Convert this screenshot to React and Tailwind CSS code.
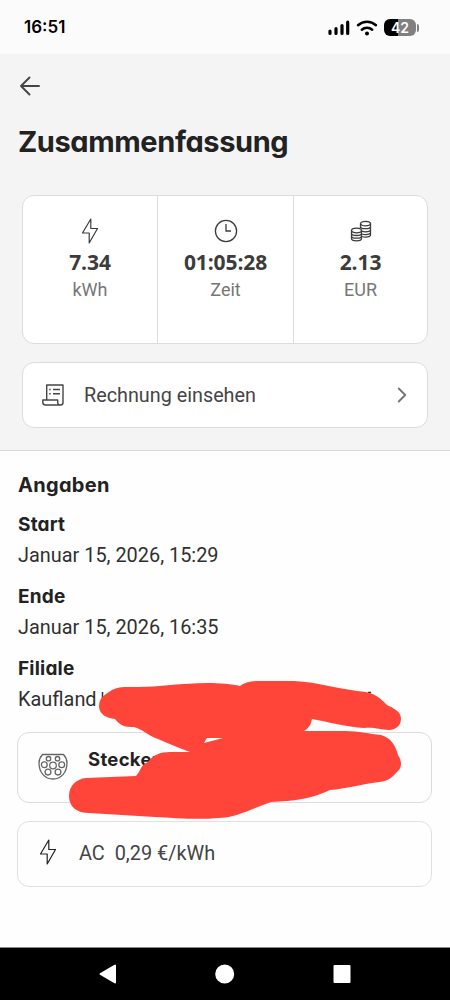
import { ChevronRight } from 'lucide-react';

function BackIcon() {
  return (
    <svg viewBox="0 0 22 20" className="h-5 w-[22px]" fill="none" stroke="currentColor" strokeWidth="1.9" strokeLinecap="round" strokeLinejoin="round">
      <path d="M10.500 1.500 2 10l8.500 8.500M2 10h18" />
    </svg>
  );
}

function BoltIcon({ className }) {
  return (
    <svg viewBox="0 0 18 28" className={className} fill="none" stroke="currentColor" strokeWidth="1.2" strokeLinejoin="round">
      <path d="M9.8 2 1.5 16H8.200V26L16.500 11.500H9.800Z" />
    </svg>
  );
}

function ClockIcon() {
  return (
    <svg viewBox="0 0 24 24" className="h-6 w-6" fill="none" stroke="currentColor" strokeWidth="1.3">
      <circle cx="12" cy="12" r="10.6" />
      <path d="M12 5v7h5" />
    </svg>
  );
}

function CoinsIcon() {
  return (
    <svg viewBox="0 0 22 22" className="h-[22px] w-[22px]" fill="none" stroke="currentColor" strokeWidth="1.3">
      <ellipse cx="15.500" cy="3.600" rx="5" ry="2.300" />
      <path d="M10.500 3.600v4.300M20.500 3.600v11.200c0 1.300-2.200 2.300-5 2.300-1.200 0-2.400-.2-3.300-.6M10.500 6.400c0 1.300 2.200 2.300 5 2.300s5-1 5-2.300M12 11.200c1 .4 2.200.6 3.500.6 2.800 0 5-1 5-2.300M12 14c1 .4 2.200.6 3.500.6 2.800 0 5-1 5-2.300" />
      <ellipse cx="6.500" cy="10.500" rx="5" ry="2.300" />
      <path d="M1.500 10.500v8c0 1.300 2.200 2.300 5 2.300s5-1 5-2.300v-8M1.500 13.200c0 1.300 2.200 2.300 5 2.300s5-1 5-2.300M1.500 15.900c0 1.300 2.200 2.300 5 2.300s5-1 5-2.300" />
    </svg>
  );
}

function ReceiptIcon() {
  return (
    <svg viewBox="0 0 22 22" className="h-[22px] w-[22px]" fill="none" stroke="currentColor" strokeWidth="1.4" strokeLinejoin="round">
      <path d="M4.700 16V1H21v17.500c0 1.500-1 2.500-2.500 2.500s-2.800-1-2.800-2.500V16H.8v2.200C.8 20 1.800 21 3.600 21h14.900" />
      <path d="M11 5.500h7M11 9.800h7" />
      <path d="M7.200 5.500h1.500M7.200 9.800h1.500" strokeWidth="1.600" />
    </svg>
  );
}

function PlugIcon() {
  return (
    <svg viewBox="0 0 30 28" className="h-[29px] w-[30px]" fill="none" stroke="currentColor" strokeWidth="1.300" strokeLinejoin="round">
      <path d="M4.500 2h21c2.200 2.400 3.500 5.400 3.500 8.500C29 20 23 26.500 15 26.500S1 20 1 10.500C1 7.400 2.300 4.400 4.500 2Z" />
      <circle cx="10.500" cy="6.200" r="2.200" />
      <circle cx="19.500" cy="6.200" r="2.200" />
      <circle cx="6.300" cy="12.300" r="2.900" />
      <circle cx="15" cy="13" r="3.300" />
      <circle cx="23.700" cy="12.300" r="2.900" />
      <circle cx="10" cy="19.600" r="2.900" />
      <circle cx="20" cy="19.600" r="2.900" />
    </svg>
  );
}

function StatusBar() {
  return (
    <div className="flex h-[54px] items-center justify-between bg-[#fbfbfb] pl-6 pr-[31px] pt-px text-black">
      <span className="font-['Inter'] text-[17px] font-semibold">16:51</span>
      <div className="flex items-center">
        <svg viewBox="0 0 22 16" className="h-4 w-[22px]" stroke="currentColor" strokeWidth="3.200" strokeLinecap="round">
          <path d="M2 13.500v-2.500M8 13.500V8.500M14 13.500V5.500M19.700 13.500V2.200" />
        </svg>
        <svg viewBox="0 0 22 16" className="ml-[6px] h-4 w-[22px]" fill="none" stroke="currentColor" strokeWidth="2.500" strokeLinecap="round">
          <path d="M2 5.200C7.300.5 14.700.5 20 5.200M5.800 9.700c3-2.700 7.400-2.700 10.400 0" />
          <circle cx="11" cy="13.500" r="2" fill="currentColor" stroke="none" />
        </svg>
        <div className="ml-[6px] flex h-[17px] w-8 items-center justify-center rounded-[6px] bg-linear-to-r from-black from-45% to-[#808080] to-45%">
          <span className="font-['Inter'] text-[14px] font-semibold leading-none text-white">42</span>
        </div>
        <div className="ml-px h-2 w-0.5 rounded-r-full bg-[#808080]" />
      </div>
    </div>
  );
}

const stats = [
  { value: '7.34', unit: 'kWh', icon: <BoltIcon className="h-7 w-[18px]" /> },
  { value: '01:05:28', unit: 'Zeit', icon: <ClockIcon /> },
  { value: '2.13', unit: 'EUR', icon: <CoinsIcon /> },
];

function Field({ label, value }) {
  return (
    <div className="mb-[10px] h-[62px]">
      <h3 className="font-['Inter'] text-[19px] font-bold leading-[30px] tracking-[0.2px] [font-feature-settings:'cv11']">{label}</h3>
      <p className="whitespace-nowrap text-[19.900px] leading-8 text-[#303030]">{value}</p>
    </div>
  );
}

export default function App() {
  return (
    <div className="relative flex h-[1000px] w-[450px] flex-col overflow-hidden bg-[#fefefe] font-['Roboto',sans-serif] text-[#222]">
      <StatusBar />

      <header className="h-[397px] border-b border-[#d8d8d8] bg-[#f4f4f4] px-[22px] pt-[22px]">
        <div className="-ml-[3px] text-[#444]"><BackIcon /></div>
        <h1 className="-ml-1 mt-[26px] whitespace-nowrap font-['Inter'] text-[29px] font-bold leading-10 tracking-[-0.4px] [font-feature-settings:'cv11']">
          Zusammenfassung
        </h1>

        <div className="mt-[33px] grid h-[149px] grid-cols-[135px_136px_1fr] divide-x divide-[#dcdcdc] rounded-xl border border-[#dcdcdc] bg-white">
          {stats.map((stat) => (
            <div key={stat.unit} className="flex flex-col items-center pt-[21px] text-[#3c3c3c]">
              <div className="flex h-7 items-center">{stat.icon}</div>
              <span className="font-['Open_Sans'] text-[21px] font-bold leading-[34px] tracking-[-0.1px]">{stat.value}</span>
              <span className="text-[18px] leading-[22px] text-[#767676]">{stat.unit}</span>
            </div>
          ))}
        </div>

        <button className="mt-[18px] flex h-[66px] w-full items-center rounded-xl border border-[#dcdcdc] bg-white pl-[19px] pr-3 text-[#454545]">
          <ReceiptIcon />
          <span className="ml-5 text-[19.800px] leading-[31px]">Rechnung einsehen</span>
          <ChevronRight className="ml-auto h-[26px] w-[26px] text-[#777]" strokeWidth={1.8} />
        </button>
      </header>

      <main className="flex-1 px-[18px] pt-[19px]">
        <h2 className="mb-[10px] font-['Inter'] text-[20px] font-bold leading-[30px] tracking-[0.3px] [font-feature-settings:'cv11']">Angaben</h2>
        <Field label="Start" value="Januar 15, 2026, 15:29" />
        <Field label="Ende" value="Januar 15, 2026, 16:35" />
        <Field label="Filiale" value="Kaufland" />

        <div className="-ml-px mt-4 flex h-[71px] rounded-xl border border-[#dcdcdc] pl-5">
          <div className="pt-[19px] text-[#666]"><PlugIcon /></div>
          <span className="ml-5 mt-3 font-['Inter'] text-[18.500px] font-bold leading-7 tracking-[0.3px]">Stecker</span>
        </div>
        <div className="-ml-px mt-[18px] flex h-[66px] items-center rounded-xl border border-[#e0e0e0] pl-[21px]">
          <BoltIcon className="-mt-1 h-7 w-[18px] text-[#222]" />
          <span className="ml-[22px] whitespace-pre text-[19.900px] text-[#444]">AC  0,29 €/kWh</span>
        </div>
      </main>

      <nav className="h-[53px] border-t border-[#888] bg-black">
        <svg viewBox="0 0 450 52" className="h-[52px] w-full" fill="#fff" stroke="#fff" strokeWidth="2" strokeLinejoin="round">
          <path d="M100.500 26 115 17.500v17Z" />
          <circle cx="224.700" cy="26" r="8.500" />
          <rect x="334.500" y="18" width="15" height="16" />
        </svg>
      </nav>

      {/* marker strokes over the location and plug details */}
      <svg viewBox="0 0 450 1000" className="pointer-events-none absolute inset-0 h-[1000px] w-[450px]">
        <path d="M102.500 699v-7M368 692.500h3" stroke="#333" strokeWidth="1.500" />
        <path
          fill="#ff453a"
          fillRule="evenodd"
          d="M99 706C99 697 106 694 112 690C119 686 128 687 138 687C158 687 182 683 207 683C220 683 232 684 240 686C244 683 250 681 258 681H294C318 682 342 690 366 692C376 694 381 699 387 705C393 708 401 711 401 719C401 726 395 730 389 730C380 730 375 727 364 728C346 727 329 722 312 719Q311 727 304 731H345C360 731 369 734 381 735C392 738 396 747 398 755C402 761 402 767 398 771C394 775 390 781 379 782C361 784 346 789 330 790C312 799 293 801 271 802C251 809 235 818 218 818C198 820 176 818 155 817L89 813C77 813 69 807 69 796C69 785 77 779 86 778L136 776C141 771 140 765 148 762C153 755 160 752 170 752H190C178 748 168 743 158 739C147 735 142 729 134 727C121 728 118 722 115 719C106 718 99 714 99 706ZM207 738L204 743L223 738Z"
        />
      </svg>
    </div>
  );
}
